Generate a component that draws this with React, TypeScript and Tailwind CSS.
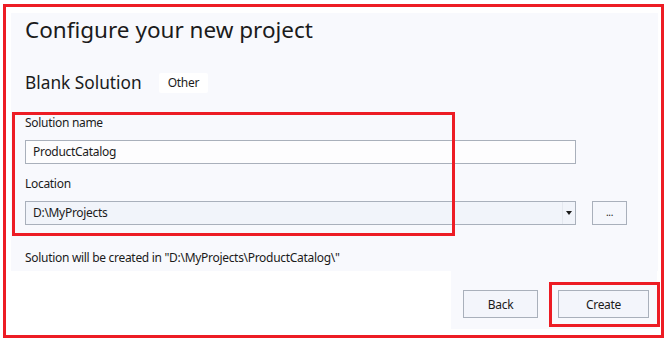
const font = { fontFamily: '"Noto Sans", "Open Sans", sans-serif' };

export default function App() {
  return (
    <div className="relative w-[667px] h-[342px] bg-white text-[#1b1b1b]" style={font}>
      <div className="pl-[11px] pt-[13px]">
        {/* main panel */}
        <div className="w-[647px] h-[258px] bg-[#f8f9fd] pl-[14px] text-[12px] tracking-[-0.3px]">
          <h1 className="pt-[2px] text-[22.5px] leading-[30px] font-normal tracking-normal">Configure your new project</h1>
          <div className="mt-[26px] flex items-center h-[24px]">
            <span className="text-[17.3px] leading-[24px] tracking-normal">Blank Solution</span>
            <span className="ml-[17px] h-[20px] px-[9px] flex items-center bg-white rounded-[2px] text-[12px]">Other</span>
          </div>
          <div className="mt-[19px] leading-[18px]">Solution name</div>
          <div className="mt-[8px] w-[551px] h-[24px] border border-[#a9b0bb] bg-[#fdfdfe] flex items-center pl-[7px]">
            ProductCatalog
          </div>
          <div className="mt-[11px] leading-[18px]">Location</div>
          <div className="mt-[8px] flex items-center">
            <div className="w-[551px] h-[24px] border border-[#a9b0bb] bg-[#f1f4fa] flex items-center">
              <span className="flex-1 pl-[7px]">D:\MyProjects</span>
              <span className="w-[13px] h-full border-l border-[#e4e8ef] flex items-center justify-center">
                <span className="w-0 h-0 border-l-[3px] border-r-[3px] border-t-[4px] border-l-transparent border-r-transparent border-t-[#1b1b1b]" />
              </span>
            </div>
            <div className="ml-[16px] w-[35px] h-[24px] border border-[#a9b0bb] bg-[#f5f7fc] flex items-center justify-center text-[10px] leading-none pb-[2px]">
              ...
            </div>
          </div>
          <div className="mt-[24px] leading-[18px]">
            Solution will be created in "D:\MyProjects\ProductCatalog\"
          </div>
        </div>
        {/* button bar */}
        <div className="ml-[440px] w-[206px] h-[58px] bg-[#f8f9fd] flex items-start pt-[19px] pl-[12px] gap-[20px] text-[12px] tracking-[-0.3px]">
          <button className="w-[75px] h-[28px] border border-[#a9b0bb] bg-[#f3f5fb] pt-[1px]">Back</button>
          <button className="w-[91px] h-[28px] border border-[#a9b0bb] bg-[#f3f5fb] pt-[1px]">Create</button>
        </div>
      </div>

      {/* annotation boxes */}
      <div className="absolute left-[3px] top-[4px] w-[661px] h-[334px] border-[3px] border-[#ed1c24] pointer-events-none" />
      <div className="absolute left-[12px] top-[112px] w-[443px] h-[124px] border-[3px] border-[#ed1c24] pointer-events-none" />
      <div className="absolute left-[549px] top-[282px] w-[111px] h-[45px] border-[3px] border-[#ed1c24] pointer-events-none" />
    </div>
  );
}
